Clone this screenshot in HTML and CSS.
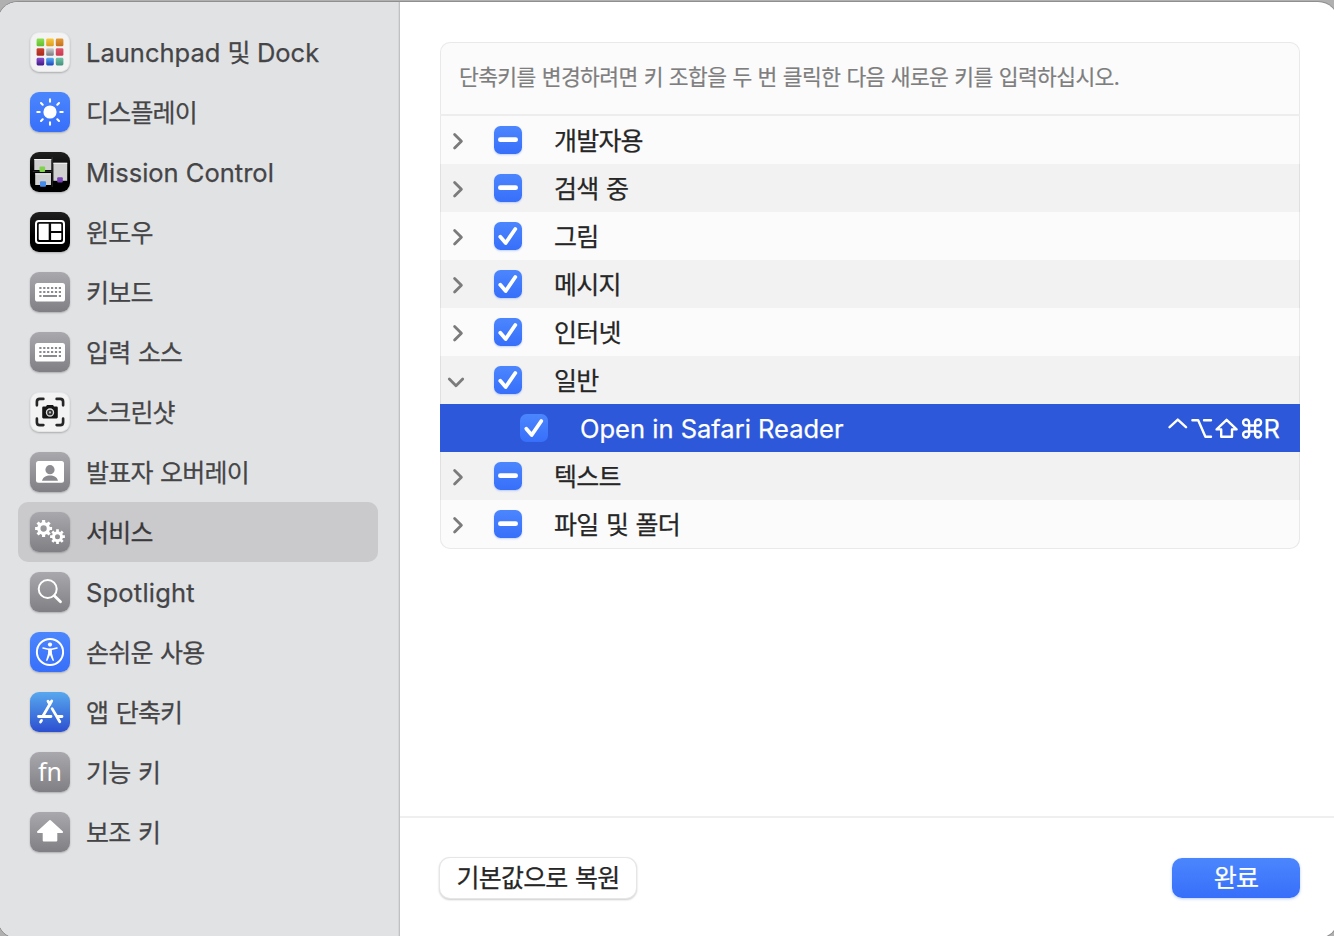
FILE: index.html
```html
<!DOCTYPE html>
<html lang="ko">
<head>
<meta charset="utf-8">
<title>키보드 단축키</title>
<link rel="stylesheet" href="styles.css">
</head>
<body>
<svg class="defs" width="0" height="0" aria-hidden="true">
  <defs>
    <linearGradient id="g1" x1="0" y1="0" x2="0" y2="1"><stop offset="0" stop-color="#8be051"/><stop offset="1" stop-color="#63be2f"/></linearGradient>
    <linearGradient id="g2" x1="0" y1="0" x2="0" y2="1"><stop offset="0" stop-color="#f5c93d"/><stop offset="1" stop-color="#dd9b20"/></linearGradient>
    <linearGradient id="g3" x1="0" y1="0" x2="0" y2="1"><stop offset="0" stop-color="#e29a35"/><stop offset="1" stop-color="#c8701f"/></linearGradient>
    <linearGradient id="g4" x1="0" y1="0" x2="0" y2="1"><stop offset="0" stop-color="#cd4231"/><stop offset="1" stop-color="#a62a19"/></linearGradient>
    <linearGradient id="g5" x1="0" y1="0" x2="0" y2="1"><stop offset="0" stop-color="#cfd0d3"/><stop offset="1" stop-color="#77787c"/></linearGradient>
    <linearGradient id="g6" x1="0" y1="0" x2="0" y2="1"><stop offset="0" stop-color="#e0566d"/><stop offset="1" stop-color="#c93a4e"/></linearGradient>
    <linearGradient id="g7" x1="0" y1="0" x2="0" y2="1"><stop offset="0" stop-color="#8f4cd0"/><stop offset="1" stop-color="#3d1b86"/></linearGradient>
    <linearGradient id="g8" x1="0" y1="0" x2="0" y2="1"><stop offset="0" stop-color="#56b1f7"/><stop offset="1" stop-color="#1b46ba"/></linearGradient>
    <linearGradient id="g9" x1="0" y1="0" x2="0" y2="1"><stop offset="0" stop-color="#73c4a6"/><stop offset="1" stop-color="#44907e"/></linearGradient>
    <symbol id="keyboard" viewBox="0 0 40 40">
      <rect x="5" y="11" width="30" height="18.5" rx="2.6" fill="#fff"/>
      <g stroke="#8b8a8f" stroke-width="2" fill="none">
        <path d="M9.3 16H31" stroke-dasharray="2.2 1.7"/>
        <path d="M9.3 20H31" stroke-dasharray="2.2 1.7"/>
        <path d="M9.3 24H11.5M13 24H27M28.8 24H31"/>
      </g>
    </symbol>
    <symbol id="check" viewBox="0 0 28 28"><path d="M6.3 14.8 11.7 21 21.3 7" fill="none" stroke="#fff" stroke-width="3.8" stroke-linecap="round" stroke-linejoin="round"/></symbol>
    <symbol id="mixed" viewBox="0 0 28 28"><path d="M6.4 13.7H21.6" stroke="#fff" stroke-width="4.8" stroke-linecap="round"/></symbol>
    <symbol id="closed" viewBox="0 0 16 20"><path d="M4.6 4.4 11.4 11.2 4.6 18" fill="none" stroke="#7b7b7b" stroke-width="2.8" stroke-linecap="round" stroke-linejoin="round"/></symbol>
    <symbol id="open" viewBox="0 0 20 20"><path d="M3.3 9 10 15.8 16.7 9" fill="none" stroke="#7b7b7b" stroke-width="2.8" stroke-linecap="round" stroke-linejoin="round"/></symbol>
  </defs>
</svg>

<div class="window">
  <nav class="sidebar">
    <a class="item"><svg class="icon light" viewBox="0 0 40 40"><rect x="5.9" y="5.9" width="8" height="8" rx="1.4" fill="url(#g1)"/><rect x="16" y="5.9" width="8" height="8" rx="1.4" fill="url(#g2)"/><rect x="26.1" y="5.9" width="8" height="8" rx="1.4" fill="url(#g3)"/><rect x="5.9" y="16" width="8" height="8" rx="1.4" fill="url(#g4)"/><rect x="16" y="16" width="8" height="8" rx="1.4" fill="url(#g5)"/><rect x="26.1" y="16" width="8" height="8" rx="1.4" fill="url(#g6)"/><rect x="5.9" y="26.1" width="8" height="8" rx="1.4" fill="url(#g7)"/><rect x="16" y="26.1" width="8" height="8" rx="1.4" fill="url(#g8)"/><rect x="26.1" y="26.1" width="8" height="8" rx="1.4" fill="url(#g9)"/></svg><span class="latin">Launchpad <span class="ko">및</span> Dock</span></a>
    <a class="item"><svg class="icon blue" viewBox="0 0 40 40"><circle cx="20" cy="20" r="6.6" fill="#fff"/><path d="M20 7.3V9.7M20 30.3V32.7M7.3 20H9.7M30.3 20H32.7M11 11l1.7 1.7M27.3 27.3l1.7 1.7M11 29l1.7-1.7M27.3 12.7l1.7-1.7" stroke="#fff" stroke-width="2.1" stroke-linecap="round"/></svg><span class="ko">디스플레이</span></a>
    <a class="item"><svg class="icon black" viewBox="0 0 40 40"><g fill="#d0d0d1"><rect x="4.3" y="7" width="17" height="11"/><rect x="5.2" y="21.3" width="15.8" height="11.7"/><rect x="23.4" y="10.8" width="13.8" height="18"/></g><path d="M4.3 7.5h17M5.2 21.8H21M23.4 11.3h13.8" stroke="#f4f4f4"/><path d="M2.8 19.4H22M22.2 5V35" stroke="#454545" stroke-width=".6"/><rect x="9.5" y="14.5" width="5.6" height="5.4" rx="1" fill="#7fd34b"/><rect x="10" y="29.3" width="6" height="5.5" rx="1" fill="#468bea"/><rect x="27.2" y="25.2" width="5.6" height="5.4" rx="1" fill="#7842b8"/></svg><span class="latin">Mission Control</span></a>
    <a class="item"><svg class="icon black" viewBox="0 0 40 40"><rect x="6" y="8.9" width="28" height="22.2" rx="2.8" fill="none" stroke="#fff" stroke-width="2"/><path d="M9.8 11.8H18.7V28.1H9.8q-1.1 0-1.1-1.1V12.9q0-1.1 1.1-1.1ZM21.1 11.8H30.2q1.1 0 1.1 1.1V18.9H21.1ZM21.1 21.1h10.2V27q0 1.1-1.1 1.1H21.1Z" fill="#fff"/></svg><span class="ko">윈도우</span></a>
    <a class="item"><svg class="icon gray"><use href="#keyboard"/></svg><span class="ko">키보드</span></a>
    <a class="item"><svg class="icon gray"><use href="#keyboard"/></svg><span class="ko">입력 소스</span></a>
    <a class="item"><svg class="icon light" viewBox="0 0 40 40"><path d="M6.2 13V9.2Q6.2 6.2 9.2 6.2H13M27 6.2h3.8q3 0 3 3V13M33.8 27v3.8q0 3-3 3H27M13 33.8H9.2q-3 0-3-3V27" fill="none" stroke="#262626" stroke-width="2.8" stroke-linecap="round"/><path d="M13 14.2h2.8l1-1.7h6.4l1 1.7H27q1.2 0 1.2 1.2v10.2q0 1.2-1.2 1.2H13q-1.2 0-1.2-1.2V15.4q0-1.2 1.2-1.2Z" fill="#151515"/><circle cx="20" cy="20.5" r="3.7" fill="#333" stroke="#dcdcdc" stroke-width="1.4"/><circle cx="20" cy="20.5" r="1.2" fill="#b9b9b9"/></svg><span class="ko">스크린샷</span></a>
    <a class="item"><svg class="icon gray" viewBox="0 0 40 40"><rect x="6" y="9" width="28" height="21.8" rx="2.5" fill="#fff"/><circle cx="20" cy="17.7" r="4.6" fill="#8d8c91"/><path d="M12 28.8c1-3.7 4.1-5.2 8-5.2s7 1.5 8 5.2Z" fill="#89888d"/></svg><span class="ko">발표자 오버레이</span></a>
    <a class="item selected"><svg class="icon gray" viewBox="0 0 40 40"><g fill="none" stroke="#fff"><circle cx="13.6" cy="16.5" r="4.8" stroke-width="3.3"/><path d="M13.6 8v3M13.6 22v3M5.1 16.5h3M19.1 16.5h3M7.6 10.5l2.1 2.1M17.5 20.4l2.1 2.1M7.6 22.5l2.1-2.1M17.5 12.6l2.1-2.1" stroke-width="3.1"/><circle cx="27.5" cy="24.7" r="4" stroke-width="3"/><path d="M27.5 17.3v3M27.5 29.1v3M20.1 24.7h3M31.9 24.7h3M22.3 19.5l2.1 2.1M30.6 27.8l2.1 2.1M22.3 29.9l2.1-2.1M30.6 21.6l2.1-2.1" stroke-width="2.7"/></g></svg><span class="ko">서비스</span></a>
    <a class="item"><svg class="icon gray" viewBox="0 0 40 40"><circle cx="17.7" cy="17" r="9" fill="none" stroke="#fff" stroke-width="2"/><path d="M24.3 23.7 30.5 29.8" stroke="#fff" stroke-width="2.8" stroke-linecap="round"/></svg><span class="latin loose">Spotlight</span></a>
    <a class="item"><svg class="icon blue" viewBox="0 0 40 40"><circle cx="20" cy="20" r="13.1" fill="none" stroke="#fff" stroke-width="2"/><circle cx="20" cy="12.6" r="2.1" fill="#fff"/><path d="M13 16.1 18.3 17.2H21.7L27 16.1" fill="none" stroke="#fff" stroke-width="1.5" stroke-linecap="round" stroke-linejoin="round"/><path d="M18.2 16.8H21.8L22 21.6 24 28.6Q23.2 29.5 22.5 28.6L20 23 17.5 28.6Q16.8 29.5 16 28.6L18 21.6Z" fill="#fff"/></svg><span class="ko">손쉬운 사용</span></a>
    <a class="item"><svg class="icon store" viewBox="0 0 40 40"><g fill="none" stroke="#fff" stroke-width="2.8" stroke-linecap="round"><path d="M21.7 9 12.8 24.3M18 9.3 20 12.6M8.5 24.5H21M27.5 24.5H32M22.1 16.6 29.8 29.7M11.5 28.5 10.5 30"/></g></svg><span class="ko">앱 단축키</span></a>
    <a class="item"><span class="icon gray fn">fn</span><span class="ko">기능 키</span></a>
    <a class="item"><svg class="icon gray" viewBox="0 0 40 40"><path d="M20 9 32 20H26.3V28.6H13.7V20H8Z" fill="#fff" stroke="#fff" stroke-width="2" stroke-linejoin="round"/></svg><span class="ko">보조 키</span></a>
  </nav>

  <main class="content">
    <section class="pane">
      <div class="card">
        <p class="hint">단축키를 변경하려면 키 조합을 두 번 클릭한 다음 새로운 키를 입력하십시오.</p>
        <div class="row"><svg class="arrow"><use href="#closed"/></svg><svg class="box"><use href="#mixed"/></svg><span class="ko">개발자용</span></div>
        <div class="row alt"><svg class="arrow"><use href="#closed"/></svg><svg class="box"><use href="#mixed"/></svg><span class="ko">검색 중</span></div>
        <div class="row"><svg class="arrow"><use href="#closed"/></svg><svg class="box"><use href="#check"/></svg><span class="ko">그림</span></div>
        <div class="row alt"><svg class="arrow"><use href="#closed"/></svg><svg class="box"><use href="#check"/></svg><span class="ko">메시지</span></div>
        <div class="row"><svg class="arrow"><use href="#closed"/></svg><svg class="box"><use href="#check"/></svg><span class="ko">인터넷</span></div>
        <div class="row alt"><svg class="arrow expanded"><use href="#open"/></svg><svg class="box"><use href="#check"/></svg><span class="ko">일반</span></div>
        <div class="row active"><svg class="box"><use href="#check"/></svg><span class="latin">Open in Safari Reader</span>
          <span class="keys"><svg width="96" height="24" viewBox="0 0 96 24" fill="none" stroke="#fff" stroke-width="2.4" stroke-linecap="round" stroke-linejoin="round"><path d="M1.6 11.2 9.8 3.6 18 11.2"/><path d="M24.4 4.2H30.2L37.4 20.8H43M36 4.2H43"/><path d="M58.6 3.8 68.6 13.4H64V20.8H53.2V13.4H48.6Z"/><path d="M81.1 9.5V6.5A3 3 0 1 0 78.1 9.5H90.1A3 3 0 1 0 87.1 6.5V18.5A3 3 0 1 0 90.1 15.5H78.1A3 3 0 1 0 81.1 18.5Z"/></svg><span class="latin">R</span></span></div>
        <div class="row alt"><svg class="arrow"><use href="#closed"/></svg><svg class="box"><use href="#mixed"/></svg><span class="ko">텍스트</span></div>
        <div class="row last"><svg class="arrow"><use href="#closed"/></svg><svg class="box"><use href="#mixed"/></svg><span class="ko">파일 및 폴더</span></div>
      </div>
    </section>
    <footer class="footer">
      <button class="button ko">기본값으로 복원</button>
      <button class="button primary ko">완료</button>
    </footer>
  </main>
</div>
</body>
</html>
```
FILE: styles.css
```css
* { box-sizing: border-box; }
html, body { height: 100%; }
body {
  margin: 0;
  padding-top: 2px;
  overflow: hidden;
  background: #b0b0b0;
  color: #262626;
  font-family: Inter, "Noto Sans CJK KR", sans-serif;
}
.defs { display: block; height: 0; }
.window {
  display: flex;
  width: 1340px;
  height: 936px;
  margin-left: -2px;
  border-radius: 20px;
  overflow: hidden;
  background: #fff;
  box-shadow: 0 0 0 1px #8f8f90;
}
.latin {
  padding-top: 2px;
  font-size: 25.5px;
  line-height: 40px;
  white-space: nowrap;
  -webkit-text-stroke: .25px currentColor;
}
.loose { letter-spacing: .2px; }
.ko {
  padding-bottom: 3px;
  font-family: "Noto Sans CJK KR", sans-serif;
  font-size: 25px;
  line-height: 40px;
  letter-spacing: -0.8px;
  word-spacing: 1.3px;
  white-space: nowrap;
  -webkit-text-stroke: .25px currentColor;
}
.latin .ko { padding: 0; line-height: 1; }

.sidebar {
  width: 402px;
  padding: 20px 20px 0 20px;
  background: #e1e2e4;
  box-shadow: inset -1px 0 #c0c1c3, inset -2px 0 #d6d7d9;
}
.item {
  display: flex;
  align-items: center;
  gap: 16px;
  width: 360px;
  height: 60px;
  padding-left: 12px;
  border-radius: 10px;
  color: #454547;
}
.item.selected { background: #cacacc; color: #39393b; }
.icon {
  flex: none;
  width: 40px;
  height: 40px;
  border-radius: 9px;
  box-shadow: 0 1px 2px rgba(0, 0, 0, .24);
}
.gray { background: linear-gradient(#a9a8ad, #807f84); }
.blue { background: linear-gradient(#4c86fd, #376ffa); }
.black { background: linear-gradient(#202020, #000 60%); }
.light { background: #f3f3f3; border: 1px solid #e5e6e7; }
.store { background: linear-gradient(#58a8ee, #2c4fd0); }
.fn {
  color: #fff;
  font: 400 25px/38px "Noto Sans", sans-serif;
  text-align: center;
}

.content { flex: 1; display: flex; flex-direction: column; }
.pane { height: 814px; padding: 40px 38px 0 40px; }
.card {
  width: 860px;
  border-radius: 10px;
  overflow: hidden;
  background: #fbfbfb;
  box-shadow: inset 0 0 0 1px #e9e9e9;
}
.hint {
  height: 74px;
  margin: 0;
  padding: 0 19px;
  border-bottom: 2px solid #ededed;
  color: #7e7e7e;
  font: 21.5px/68px "Noto Sans CJK KR", sans-serif;
  letter-spacing: -0.6px;
  word-spacing: .6px;
  white-space: nowrap;
  -webkit-text-stroke: .2px currentColor;
}
.row {
  display: flex;
  align-items: center;
  height: 48px;
  padding-left: 10px;
}
.last { height: 49px; padding-bottom: 1px; }
.alt { background: rgba(0, 0, 0, .037); }
.arrow { width: 16px; height: 20px; margin-right: 28px; }
.expanded { width: 20px; margin: 0 28px 0 -4px; }
.box {
  width: 28px;
  height: 28px;
  margin-right: 32px;
  border-radius: 6.5px;
  background: linear-gradient(#4c86fd, #376ffa);
  box-shadow: 0 1px 2px rgba(55, 111, 250, .3);
}
.active { padding: 0 20px 0 80px; background: #2c58d9; color: #fff; }
.active .box { box-shadow: none; }
.keys { display: flex; align-items: center; margin-left: auto; }

.footer {
  display: flex;
  justify-content: space-between;
  height: 122px;
  padding: 40px 38px 0 40px;
  border-top: 2px solid #efefef;
}
.button {
  width: 196px;
  height: 40px;
  padding: 0 0 4px;
  border: 0;
  border-radius: 10px;
  background: #fff;
  color: #262626;
  line-height: 34px;
  box-shadow: 0 0 0 1px #e6e6e6, 0 1px 2px 1px rgba(0, 0, 0, .2);
}
.primary {
  width: 128px;
  background: linear-gradient(#4c86fd, #376ffa);
  color: #fff;
  box-shadow: 0 1px 3px rgba(55, 111, 250, .35);
}
```
